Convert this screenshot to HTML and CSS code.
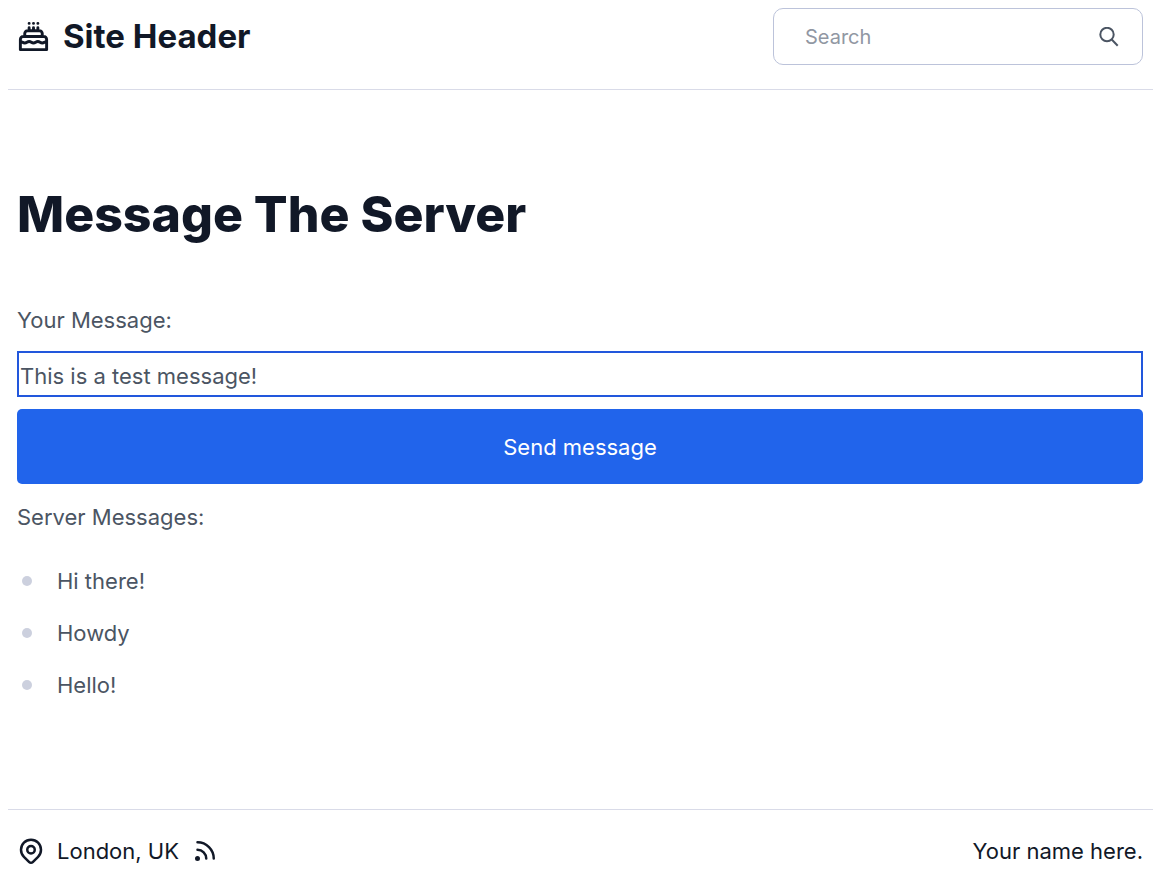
FILE: index.html
```html
<!DOCTYPE html>
<html lang="en">
<head>
<meta charset="utf-8">
<meta name="viewport" content="width=device-width, initial-scale=1">
<title>Message The Server</title>
<link rel="stylesheet" href="styles.css">
</head>
<body>
<div class="page">
  <header class="site-header">
    <div class="brand">
      <svg class="brand-icon" viewBox="0 0 24 24" aria-hidden="true"><path d="M21 15.546c-.523 0-1.046.151-1.5.454a2.704 2.704 0 01-3 0 2.704 2.704 0 00-3 0 2.704 2.704 0 01-3 0 2.704 2.704 0 00-3 0 2.704 2.704 0 01-3 0 2.701 2.701 0 00-1.5-.454M9 6v2m3-2v2m3-2v2M9 3h.01M12 3h.01M15 3h.01M21 21v-7a2 2 0 00-2-2H5a2 2 0 00-2 2v7h18zm-3-9v-2a2 2 0 00-2-2H8a2 2 0 00-2 2v2h12z"/></svg>
      <span>Site Header</span>
    </div>
    <form class="search" role="search">
      <input class="search-input" type="search" placeholder="Search" aria-label="Search">
      <button class="search-button" type="button" aria-label="Submit search">
        <svg class="search-icon" viewBox="0 0 20 20" aria-hidden="true"><circle cx="8" cy="7.5" r="6.7"/><path d="M12.7 12.5l6 6.2"/></svg>
      </button>
    </form>
  </header>
  <main class="content">
    <h1 class="title">Message The Server</h1>
    <form class="message-form">
      <label class="label" for="message">Your Message:</label>
      <input class="message-input" id="message" type="text" value="This is a test message!">
      <button class="send" type="button">Send message</button>
    </form>
    <p class="label">Server Messages:</p>
    <ul class="messages">
      <li>Hi there!</li>
      <li>Howdy</li>
      <li>Hello!</li>
    </ul>
  </main>
  <footer class="site-footer">
    <div class="place">
      <svg class="footer-icon" viewBox="0 0 24 24" aria-hidden="true"><path d="M17.657 16.657L13.414 20.9a1.998 1.998 0 01-2.827 0l-4.244-4.243a8 8 0 1111.314 0z"/><path d="M15 11a3 3 0 11-6 0 3 3 0 016 0z"/></svg>
      <span>London, UK</span>
      <svg class="footer-icon" viewBox="0 0 24 24" aria-hidden="true"><path d="M6 5c7.18 0 13 5.82 13 13M6 11a7 7 0 017 7m-6 0a1 1 0 11-2 0 1 1 0 012 0z"/></svg>
    </div>
    <span>Your name here.</span>
  </footer>
</div>
</body>
</html>
```
FILE: styles.css
```css
* {
  box-sizing: border-box;
}

body {
  margin: 0;
  background: #fff;
  color: #111827;
  font-family: Inter, "Liberation Sans", sans-serif;
  font-size: 22px;
  line-height: 36px;
}

input,
button {
  margin: 0;
  font: inherit;
}

.page {
  padding: 0 8px;
}

.site-header {
  display: flex;
  align-items: flex-start;
  justify-content: space-between;
  padding: 8px 10px 24px 8px;
  border-bottom: 1px solid #d9dbe8;
}

.brand {
  display: flex;
  align-items: center;
  gap: 12px;
  height: 56px;
  font-size: 33px;
  font-weight: 700;
}

.brand-icon,
.footer-icon {
  fill: none;
  stroke: currentColor;
  stroke-width: 2;
  stroke-linecap: round;
  stroke-linejoin: round;
}

.brand-icon {
  width: 35px;
  height: 35px;
}

.search {
  display: flex;
  align-items: center;
  width: 370px;
  height: 57px;
  padding: 0 23px 0 31px;
  border: 1px solid #bcc3da;
  border-radius: 10px;
}

.search-input {
  flex: 1;
  min-width: 0;
  padding: 0;
  border: 0;
  outline: 0;
  background: none;
  color: #4b5563;
  font-size: 20px;
}

.search-input::placeholder {
  color: #9197a3;
}

.search-button {
  display: flex;
  padding: 0;
  border: 0;
  background: none;
  color: #4b5563;
}

.search-icon {
  width: 20px;
  height: 20px;
  fill: none;
  stroke: currentColor;
  stroke-width: 2;
}

.content {
  padding: 92px 10px 106px 9px;
  color: #4b5563;
}

.title {
  margin: 0 0 56px;
  color: #111827;
  font-size: 50px;
  font-weight: 800;
  line-height: 64px;
}

.message-form {
  display: flex;
  flex-direction: column;
}

.label {
  display: block;
  margin: 0;
}

.message-input {
  height: 46px;
  margin: 13px 0 12px;
  padding: 3px 1px 0;
  border: 2px solid #2257dc;
  border-radius: 0;
  outline: 0;
  background: #fff;
  color: #4b5563;
}

.send {
  height: 75px;
  margin-bottom: 15px;
  padding: 0;
  border: 0;
  border-radius: 5px;
  background: #2164eb;
  color: #fff;
}

.messages {
  display: grid;
  gap: 16px;
  margin: 28px 0 0;
  padding: 0;
  list-style: none;
}

.messages li {
  display: flex;
  align-items: center;
  gap: 25px;
  padding-left: 5px;
}

.messages li::before {
  content: "";
  width: 10px;
  height: 10px;
  border-radius: 50%;
  background: #ccd0de;
}

.site-footer {
  display: flex;
  align-items: center;
  justify-content: space-between;
  padding: 23px 10px 0 8px;
  border-top: 1px solid #d9dbe8;
}

.place {
  display: flex;
  align-items: center;
  gap: 11px;
}

.footer-icon {
  width: 30px;
  height: 30px;
}
```
